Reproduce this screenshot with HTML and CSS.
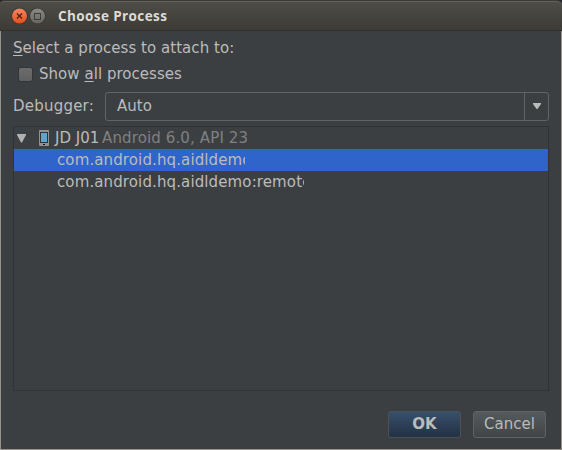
FILE: index.html
```html
<!DOCTYPE html>
<html lang="en">
<head>
<meta charset="utf-8">
<title>Choose Process</title>
<link rel="stylesheet" href="styles.css">
</head>
<body>
<div class="window">
  <header class="titlebar">
    <svg class="controls" width="36" height="18" viewBox="0 0 36 18">
      <defs>
        <linearGradient id="close" x1="0" y1="0" x2="0" y2="1"><stop offset="0" stop-color="#f58562"/><stop offset="1" stop-color="#e64f1b"/></linearGradient>
        <linearGradient id="max" x1="0" y1="0" x2="0" y2="1"><stop offset="0" stop-color="#8b8a84"/><stop offset="1" stop-color="#66655f"/></linearGradient>
      </defs>
      <circle cx="8.5" cy="9" r="8.3" fill="#383732"/>
      <circle cx="8.5" cy="9" r="7.5" fill="url(#close)"/>
      <path d="M6 6.5l5 5M11 6.5l-5 5" stroke="#4b2114" stroke-width="1.3"/>
      <circle cx="26.5" cy="9" r="8.3" fill="#383732"/>
      <circle cx="26.5" cy="9" r="7.5" fill="url(#max)"/>
      <rect x="23.5" y="6.5" width="6" height="6" fill="none" stroke="#3e3d38"/>
    </svg>
    <h1 class="title">Choose Process</h1>
  </header>
  <main class="content">
    <p class="prompt"><u>S</u>elect a process to attach to:</p>
    <label class="check"><span class="box"></span><span>Show <u>a</u>ll processes</span></label>
    <div class="field">
      <span class="field-label">Debugger:</span>
      <div class="combo">
        <span class="combo-value">Auto</span>
        <span class="combo-button"><svg width="8" height="6" viewBox="0 0 8 6"><path d="M0 0h8v1L4.5 6h-1L0 1z" fill="#bbb"/></svg></span>
      </div>
    </div>
    <div class="tree">
      <div class="row device">
        <svg class="arrow" width="9" height="9" viewBox="0 0 9 9"><path d="M0 0h9v1L5 8.5H4L0 1z" fill="#b2b2b2"/></svg>
        <svg class="phone" width="10" height="16" viewBox="0 0 10 16"><rect width="10" height="16" rx="1" fill="#929292"/><rect x="1" y="2" width="8" height="11" fill="#303335"/><rect x="2" y="3" width="6" height="9" fill="#62a3cb"/><rect x="4" y="14" width="2" height="1" fill="#111"/></svg>
        <span class="name">JD J01</span><span class="detail">Android 6.0, API 23</span>
      </div>
      <div class="row process selected"><span class="clip short">com.android.hq.aidldemo</span></div>
      <div class="row process"><span class="clip long">com.android.hq.aidldemo:remote</span></div>
    </div>
    <footer class="actions">
      <button class="button primary">OK</button>
      <button class="button">Cancel</button>
    </footer>
  </main>
</div>
</body>
</html>
```
FILE: styles.css
```css
* { box-sizing: border-box; }
body { margin: 0; background: #24252a; overflow: hidden; }
.window {
  width: 562px;
  height: 450px;
  display: flex;
  flex-direction: column;
  font: 15px/22px "DejaVu Sans", sans-serif;
  color: #bbb;
}
.titlebar {
  height: 31px;
  flex: none;
  display: flex;
  align-items: center;
  padding: 1px 0 0 11px;
  background: linear-gradient(#4f4d46, #3c3b37);
  border-top: 1px solid #3b3a36;
  border-bottom: 1px solid #33322f;
  box-shadow: inset 0 1px #63625a;
  border-radius: 4px 5px 0 0;
}
.controls { flex: none; }
.title {
  margin: 0 0 0 11px;
  font: bold 13.5px/18px "Open Sans", "Noto Sans", sans-serif;
  letter-spacing: 0.4px;
  color: #dfdbd2;
}
.content {
  flex: 1;
  display: flex;
  flex-direction: column;
  padding: 6px 12px 0;
  background: #3c3f41;
  border: 1px solid #96938d;
  border-top: 0;
}
.prompt { margin: 0; height: 22px; letter-spacing: 0.04px; }
u { text-decoration-thickness: 1px; text-underline-offset: 2px; }
.check { display: flex; align-items: center; height: 30px; padding-left: 6px; gap: 7px; letter-spacing: 0.04px; }
.box {
  width: 13px;
  height: 13px;
  background: linear-gradient(#6c6c6c, #606060);
  border-radius: 2px;
  box-shadow: 0 0 0 1px #333537;
}
.field { display: flex; align-items: center; height: 30px; margin-top: 2px; }
.field-label { width: 92px; letter-spacing: 0.22px; }
.combo {
  flex: 1;
  height: 29px;
  display: flex;
  align-items: center;
  border: 1px solid #646464;
  border-radius: 3px;
}
.combo-value { flex: 1; padding-left: 11px; }
.combo-button {
  width: 24px;
  height: 27px;
  display: flex;
  align-items: center;
  justify-content: center;
  border-left: 1px solid #646464;
}
.tree { height: 265px; margin-top: 5px; border: 1px solid #313335; }
.row { height: 22px; display: flex; align-items: center; white-space: nowrap; }
.device { padding-left: 3px; }
.phone { margin: 0 6px 0 13px; }
.name { width: 47px; }
.detail { width: 145px; overflow: hidden; color: #808080; letter-spacing: 0.13px; }
.process { padding-left: 43px; letter-spacing: 0.12px; }
.selected { background: #2f65ca; }
.clip { overflow: hidden; }
.short { width: 188px; }
.long { width: 247px; }
.actions { display: flex; justify-content: flex-end; gap: 12px; padding: 20px 3px 0 0; }
.button {
  width: 73px;
  height: 27px;
  padding: 0 0 1px;
  font: inherit;
  color: #bbb;
  background: linear-gradient(#555a5c, #414547);
  border: 1px solid #606365;
  border-radius: 3px;
}
.primary { font-weight: bold; background: linear-gradient(#384f6b, #233143); border-color: #4c5157; }
```
